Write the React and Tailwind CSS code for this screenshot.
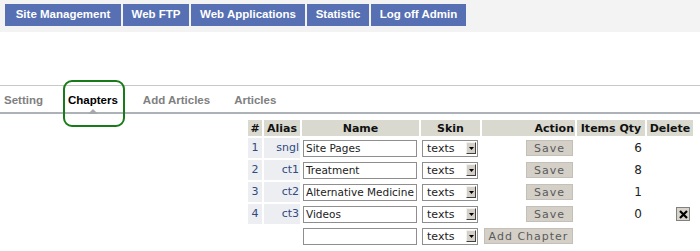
import React from "react";

const navItems = [
  { label: "Site Management", w: "w-[116px]" },
  { label: "Web FTP", w: "w-[66px]" },
  { label: "Web Applications", w: "w-[114px]" },
  { label: "Statistic", w: "w-[62px]" },
  { label: "Log off Admin", w: "w-[95px]" },
];

const rows = [
  { n: 1, alias: "sngl", name: "Site Pages", qty: 6, del: false },
  { n: 2, alias: "ct1", name: "Treatment", qty: 8, del: false },
  { n: 3, alias: "ct2", name: "Alternative Medicine", qty: 1, del: false },
  { n: 4, alias: "ct3", name: "Videos", qty: 0, del: true },
];

function TextBox({ value }) {
  return (
    <div className="ml-[1px] w-[114px] h-[17px] border border-[#8e8e8e] bg-white pl-[2px] leading-[15px] text-[10.5px] text-[#222] whitespace-nowrap overflow-hidden">
      {value}
    </div>
  );
}

function SkinSelect() {
  return (
    <div className="ml-[1px] w-[56px] h-[17px] border border-[#8e8e8e] bg-white flex items-center justify-between pl-[4px] pr-[1px]">
      <span className="leading-[15px] text-[#222]">texts</span>
      <div className="w-[10px] h-[12px] bg-[#d4d0c8] border-t border-l border-t-[#f4f2ee] border-l-[#f4f2ee] border-r border-b border-r-[#404040] border-b-[#404040] flex items-center justify-center">
        <svg width="5" height="3" viewBox="0 0 5 3">
          <path d="M0 0H5L2.5 3Z" fill="#000" />
        </svg>
      </div>
    </div>
  );
}

function GrayButton({ children, w }) {
  return (
    <div
      className={`${w} h-[16px] bg-[#d4d0c8] border border-[#c4c0b8] flex items-center justify-center text-[#5a5a5a] tracking-[1px] leading-none`}
    >
      {children}
    </div>
  );
}

function DeleteIcon() {
  return (
    <div className="w-[14px] h-[14px] bg-[#d8d4cc] border border-[#808080] flex items-center justify-center">
      <svg width="9" height="9" viewBox="0 0 9 9">
        <path d="M1 1L8 8M8 1L1 8" stroke="#000" strokeWidth="2.2" />
      </svg>
    </div>
  );
}

export default function App() {
  const font = { fontFamily: '"DejaVu Sans", Verdana, sans-serif' };
  return (
    <div className="w-[700px] h-[251px] bg-white overflow-hidden">
      {/* Top nav */}
      <div className="h-[32px] bg-[#f3f3f3] pt-[4px] pl-[5px] flex gap-[2px] items-start">
        {navItems.map((it) => (
          <div
            key={it.label}
            className={`${it.w} h-[22px] bg-[#5670b3] text-white font-bold text-[11.5px] flex items-center justify-center whitespace-nowrap`}
            style={{ fontFamily: '"Liberation Sans", Arial, sans-serif' }}
          >
            {it.label}
          </div>
        ))}
      </div>

      <div className="h-[53px]" />

      {/* Tabs */}
      <div
        className="relative h-[29px] pt-[3px] border-t border-t-[#c8c8c8] border-b-2 border-b-[#adb1b8] flex items-center text-[11.5px] font-bold text-[#808080]"
        style={{ fontFamily: '"Liberation Sans", Arial, sans-serif' }}
      >
        <span className="ml-[4px]">Setting</span>
        <span className="ml-[25px] text-black relative">
          Chapters
          <svg
            className="absolute left-[20px] top-[17px]"
            width="10"
            height="5"
            viewBox="0 0 10 5"
          >
            <path d="M0 5L5 0L10 5Z" fill="#a4a8ae" />
          </svg>
        </span>
        <span className="ml-[25px]">Add Articles</span>
        <span className="ml-[24px]">Articles</span>
        <div className="absolute left-[63px] top-[-6px] w-[62px] h-[47px] border-2 border-[#187a18] rounded-[9px]" />
      </div>

      {/* Table */}
      <div className="pl-[246px] pt-[4px] text-[11px]" style={font}>
        <table className="table-fixed border-separate border-spacing-[2px]">
          <colgroup>
            <col className="w-[14px]" />
            <col className="w-[36px]" />
            <col className="w-[117px]" />
            <col className="w-[59px]" />
            <col className="w-[93px]" />
            <col className="w-[68px]" />
            <col className="w-[46px]" />
          </colgroup>
          <thead>
            <tr className="h-[16px] bg-[#d9d9d0] font-bold text-[#111] leading-none">
              <th className="p-0 text-center font-bold">#</th>
              <th className="p-0 text-center font-bold">Alias</th>
              <th className="p-0 text-center font-bold">Name</th>
              <th className="p-0 text-center font-bold">Skin</th>
              <th className="p-0 text-right pr-[1px] font-bold">Action</th>
              <th className="p-0 text-center font-bold whitespace-nowrap">Items Qty</th>
              <th className="p-0 text-center font-bold">Delete</th>
            </tr>
          </thead>
          <tbody>
            {rows.map((r) => (
              <tr key={r.n} className="h-[20px]">
                <td className="p-0 bg-[#eceef2] text-center text-[#2f4a80]">{r.n}</td>
                <td className="p-0 bg-[#eceef2] text-right pr-[1px] text-[#2f4a80]">{r.alias}</td>
                <td className="p-0">
                  <TextBox value={r.name} />
                </td>
                <td className="p-0">
                  <SkinSelect />
                </td>
                <td className="p-0">
                  <div className="flex justify-end pr-[2px]">
                    <GrayButton w="w-[47px]">Save</GrayButton>
                  </div>
                </td>
                <td className="p-0 text-right pr-[3px] text-[12px] text-[#222]">{r.qty}</td>
                <td className="p-0">
                  {r.del && (
                    <div className="flex justify-end pr-[3px]">
                      <DeleteIcon />
                    </div>
                  )}
                </td>
              </tr>
            ))}
            <tr className="h-[20px]">
              <td className="p-0" />
              <td className="p-0" />
              <td className="p-0">
                <TextBox value="" />
              </td>
              <td className="p-0">
                <SkinSelect />
              </td>
              <td className="p-0">
                <div className="flex justify-end pr-[2px]">
                  <GrayButton w="w-[89px]">Add Chapter</GrayButton>
                </div>
              </td>
              <td className="p-0" />
              <td className="p-0" />
            </tr>
          </tbody>
        </table>
      </div>
    </div>
  );
}
